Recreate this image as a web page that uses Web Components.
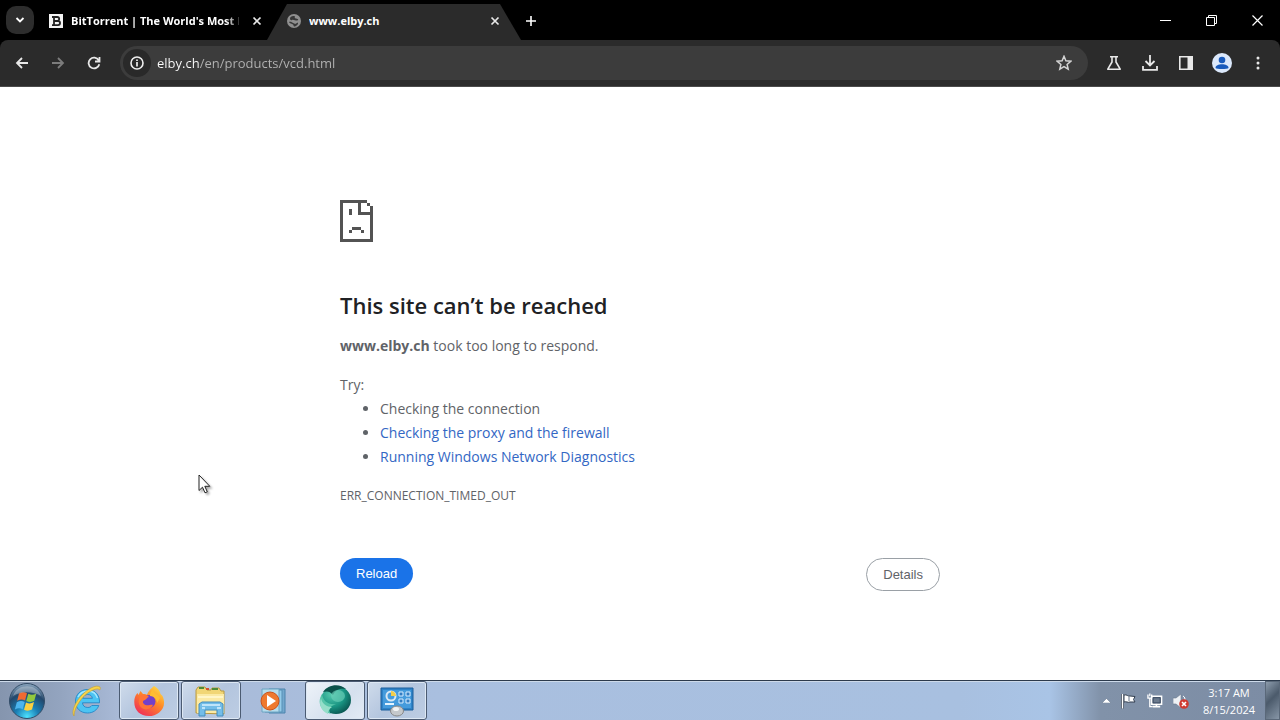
<!DOCTYPE html>
<html lang="en">
<head>
<meta charset="utf-8">
<meta name="viewport" content="width=device-width, initial-scale=1">
<title>www.elby.ch</title>
<style>
  body { margin: 0; background: #fff; font-family: "Open Sans", "Noto Sans", sans-serif; }
</style>
</head>
<body>
<desktop-screen></desktop-screen>
<script>
const define = (name, html) => {
  const template = document.createElement('template');
  template.innerHTML = html;
  customElements.define(name, class extends HTMLElement {
    constructor() {
      super();
      this.attachShadow({ mode: 'open' }).append(template.content.cloneNode(true));
    }
  });
};

define('icon-button', `
<style>
  :host { display: block; flex: none; width: 36px; height: 32px; color: #e8e8e8; }
  :host([wide]) { width: 46px; }
  :host([small]) { width: 20px; height: 20px; }
  :host([dim]) { color: #7c7c7c; }
  button { all: unset; width: 100%; height: 100%; display: flex; align-items: center; justify-content: center; }
</style>
<button type="button"><slot></slot></button>`);

define('browser-tab', `
<style>
  :host { display: flex; align-items: center; gap: 8px; height: 36px; box-sizing: border-box; padding-bottom: 2px; color: #fff; font: bold 11px/16px "Open Sans", sans-serif; }
  :host([active]) { background: #2b2b2b; clip-path: polygon(20px 0, 233px 0, 100% 100%, 0 100%); }
  .title { flex: 1; min-width: 0; overflow: hidden; white-space: nowrap; }
  :host(:not([active])) .title { -webkit-mask-image: linear-gradient(90deg, #000 155px, transparent 172px); mask-image: linear-gradient(90deg, #000 155px, transparent 172px); }
</style>
<slot name="icon"></slot>
<span class="title"><slot></slot></span>
<icon-button small><svg width="10" height="10" aria-label="Close tab"><path d="M1.500 1.500l7 7m0-7l-7 7" stroke="currentColor" stroke-width="1.700"/></svg></icon-button>`);

define('tab-strip', `
<style>
  :host { display: flex; align-items: end; height: 40px; background: #000; }
  .search { all: unset; margin: 0 15px 6px 6px; width: 28px; height: 28px; border-radius: 10px; background: #2d2d2d; display: grid; place-items: center; }
  .first { width: 218px; }
  .second { width: 254px; padding: 0 16px 2px 20px; }
  .add { height: 36px; padding-bottom: 2px; box-sizing: border-box; display: flex; align-items: center; }
  .window { margin-left: auto; height: 40px; display: flex; align-items: center; }
  svg { flex: none; display: block; }
</style>
<button class="search" aria-label="Search tabs"><svg width="10" height="8"><path d="M1.500 2L5 5.500 8.500 2" fill="none" stroke="#fff" stroke-width="1.800"/></svg></button>
<browser-tab class="first">
  <svg slot="icon" width="14" height="14" viewBox="0 0 14 14"><path fill="#f4f4f4" d="M0 0h14v14H0z"/><path fill="none" stroke="#222" stroke-width="1.800" d="M3 3h5.200a1.900 1.900 0 010 4H5h4a2 2 0 010 4.100H3M5 3v8"/></svg>BitTorrent | The World's Most Popular</browser-tab>
<browser-tab class="second" active>
  <svg slot="icon" width="14" height="14" viewBox="0 0 14 14"><circle cx="7" cy="7" r="7" fill="#8f8f8f"/><path d="M3 4.500c0-2 3-3 5-2-1 1.500.5 2 2.500 2.500 1 .3 1 1.500-.5 1.500C8 6.500 6 5 5 6 4 6.500 3 6 3 4.500zM2 8c2-.5 3 .5 4 1 1.500.5 2 1.500 3 .5l2-1c.5 2-2 4-4 4-1-1 0-2-2-2.500C3.500 9.500 2.500 9 2 8z" fill="#383838"/></svg>www.elby.ch</browser-tab>
<div class="add"><icon-button small><svg width="12" height="12" aria-label="New tab"><path d="M6 1v10M1 6h10" stroke="#fff" stroke-width="1.600"/></svg></icon-button></div>
<div class="window">
  <icon-button wide><svg width="11" height="11" aria-label="Minimize"><path d="M0 5.500h11" stroke="#fff"/></svg></icon-button>
  <icon-button wide><svg width="11" height="11" aria-label="Restore"><path d="M.5 2.500h8v8h-8zM2.500 2.500v-2h8v8h-2" fill="none" stroke="#fff"/></svg></icon-button>
  <icon-button wide><svg width="11" height="11" aria-label="Close"><path d="M.5 .5l10 10m0-10l-10 10" stroke="#fff" stroke-width="1.200"/></svg></icon-button>
</div>`);

define('address-bar', `
<style>
  :host { flex: 1; display: flex; align-items: center; height: 34px; border-radius: 17px; background: #3c3c3c; padding: 0 6px 0 3px; box-sizing: border-box; }
  .info { display: grid; place-items: center; width: 28px; height: 28px; border-radius: 50%; background: #292929; }
  input { flex: 1; min-width: 0; height: 24px; border: 0; padding: 0; margin: 0 6px; outline: 0; font: 13px/24px "Open Sans", sans-serif; color: transparent; background: linear-gradient(90deg, #fff 42px, #b4b4b4 42px); -webkit-background-clip: text; background-clip: text; }
</style>
<span class="info"><svg width="14" height="14" viewBox="0 0 14 14"><circle cx="7" cy="7" r="6" fill="none" stroke="#eee" stroke-width="1.600"/><path d="M7 6v4.500M7 3.500v1.600" stroke="#eee" stroke-width="1.700"/></svg></span>
<input type="text" aria-label="Address" value="elby.ch/en/products/vcd.html" spellcheck="false">
<icon-button><svg width="16" height="16" viewBox="0 0 16 16"><path d="M8 1.300l1.900 4.500 4.900.4-3.700 3.200 1.100 4.800L8 11.700l-4.200 2.500 1.100-4.800L1.200 6.200l4.900-.4z" fill="none" stroke="#d4d4d4" stroke-width="1.500"/></svg></icon-button>`);

define('nav-toolbar', `
<style>
  :host { display: block; background: #000; }
  nav { display: flex; align-items: center; height: 47px; box-sizing: border-box; padding: 0 4px; background: #2b2b2b; border-radius: 8px 8px 0 0; border-bottom: 1px solid #4a4a4a; }
  address-bar { margin: 0 8px; }
</style>
<nav>
  <icon-button><svg width="14" height="12" viewBox="0 0 14 12" fill="none" aria-label="Back"><path d="M13 6H2M7 1L2 6l5 5" stroke="currentColor" stroke-width="1.800"/></svg></icon-button>
  <icon-button dim><svg width="14" height="12" viewBox="0 0 14 12" fill="none" aria-label="Forward"><path d="M1 6h11M7 1l5 5-5 5" stroke="currentColor" stroke-width="1.800"/></svg></icon-button>
  <icon-button><svg width="14" height="14" viewBox="0 0 14 14" fill="none" aria-label="Reload page"><path d="M11.700 4.300A5.400 5.400 0 1012.300 8.200M12.500 1v4.500H8" stroke="currentColor" stroke-width="1.800"/></svg></icon-button>
  <address-bar></address-bar>
  <icon-button><svg width="16" height="16" viewBox="0 0 16 16" fill="none" aria-label="Labs"><path d="M4 1.800h8M6 2v5L1.800 14.200h12.400L10 7V2" stroke="currentColor" stroke-width="1.600" stroke-linejoin="round"/></svg></icon-button>
  <icon-button><svg width="16" height="16" viewBox="0 0 16 16" fill="none" aria-label="Downloads"><path d="M8 0v10M3.500 6L8 10.500 12.500 6M1 11v3.800h14V11" stroke="currentColor" stroke-width="1.800"/></svg></icon-button>
  <icon-button><svg width="14" height="14" viewBox="0 0 14 14" fill="none" aria-label="Side panel"><path d="M.8 .8h12.400v12.400H.8z" stroke="currentColor" stroke-width="1.600"/><path d="M8.500 0H14v14H8.500z" fill="currentColor"/></svg></icon-button>
  <icon-button><svg width="20" height="20" viewBox="0 0 20 20" aria-label="Profile"><circle cx="10" cy="10" r="10" fill="#dbe8fb"/><circle cx="10" cy="7" r="3.300" fill="#185abc"/><path d="M3.500 15c0-2.500 3-3.700 6.500-3.700s6.500 1.200 6.500 3.700c-1 1.300-12 1.300-13 0z" fill="#185abc"/></svg></icon-button>
  <icon-button><svg width="4" height="14" viewBox="0 0 4 14" fill="currentColor" aria-label="Menu"><circle cx="2" cy="2" r="1.500"/><circle cx="2" cy="7" r="1.500"/><circle cx="2" cy="12" r="1.500"/></svg></icon-button>
</nav>`);

define('error-page', `
<style>
  :host { display: block; width: 100%; max-width: 600px; margin: 0 auto; padding-top: 113px; box-sizing: border-box; color: #5f6368; font-size: 14px; line-height: 24px; }
  svg { display: block; }
  h1 { margin: 46px 0 12px; font-size: 22px; line-height: 34px; font-weight: 600; color: #202124; }
  p { margin: 0; }
  .try { margin-top: 15px; }
  ul { margin: 0; padding-left: 40px; }
  a { color: #3367c4; text-decoration: none; }
  .code { margin: 15px 0 50px; font-size: 12px; }
  .actions { display: flex; justify-content: space-between; align-items: start; }
  button { box-sizing: border-box; height: 31px; padding: 0 16px; border: 0; border-radius: 17px; font: 13px/16px "Liberation Sans", sans-serif; background: #1a73e8; color: #fff; }
  .details { height: 33px; border: 1px solid #9aa0a6; background: #fff; color: #5f6368; }
</style>
<svg width="33" height="42" viewBox="0 0 11 14" fill="#535353" shape-rendering="crispEdges" aria-hidden="true"><path d="M0 0h9v1h1v1h1v12H0zM1 1v12h9V5H6V1zM7 1v3h3V2H9V1zM3 3h1v2H3zM4 9h3v1H4zM3 10h1v1H3zM7 10h1v1H7z" fill-rule="evenodd"/></svg>
<h1>This site can’t be reached</h1>
<p><strong>www.elby.ch</strong> took too long to respond.</p>
<p class="try">Try:</p>
<ul>
  <li>Checking the connection</li>
  <li><a href="#proxy">Checking the proxy and the firewall</a></li>
  <li><a href="#diagnostics">Running Windows Network Diagnostics</a></li>
</ul>
<p class="code">ERR_CONNECTION_TIMED_OUT</p>
<div class="actions"><button type="button">Reload</button><button type="button" class="details">Details</button></div>`);

define('task-button', `
<style>
  :host { display: block; width: 60px; height: 39px; }
  button { all: unset; box-sizing: border-box; width: 100%; height: 100%; display: grid; place-items: center; border: 1px solid transparent; border-radius: 3px; }
  :host([open]) button { border-color: #4b5b72; background: linear-gradient(135deg, #cfdbeb, #b3c5de 50%, #bdcde3); box-shadow: inset 0 0 0 1px #dde8f4; }
  :host([front]) button { background: linear-gradient(135deg, #eef3f9, #d5e0ee 60%, #e3ebf5); }
</style>
<button type="button"><slot></slot></button>`);

define('system-tray', `
<style>
  :host { display: flex; align-items: center; height: 39px; margin-left: auto; color: #fff; }
  .icons { display: flex; align-items: center; gap: 10px; margin-right: 9px; }
  time { width: 62px; text-align: center; font: 11px/17px "Open Sans", sans-serif; }
  .peek { all: unset; box-sizing: border-box; width: 15px; height: 39px; margin-left: 5px; border: 1px solid #5a6879; background: linear-gradient(135deg, #8c9bac, #4b5a6b 45%, #8796a7); }
  svg { display: block; }
</style>
<div class="icons">
  <svg width="9" height="5"><path d="M0 5l4.500-4.500L9 5z" fill="#fff" stroke="#465b77" stroke-width=".4"/></svg>
  <svg width="16" height="16" viewBox="0 0 16 16"><path d="M1.500 1v14.500" stroke="#333f50" stroke-width="3"/><path d="M3 2c3-1 4 2 6 1l5 .5-1.500 3L14 9H9C7 10 5 8 3 9z" fill="#fff" stroke="#333f50"/><path d="M1.500 1v14.500" stroke="#fff" stroke-width="1.500"/><path d="M8 4v4" stroke="#68778b"/></svg>
  <svg width="16" height="16" viewBox="0 0 17 16"><path d="M5 3h10.500v8.500H5z" fill="#6b7a8e" stroke="#fff" stroke-width="1.600"/><path d="M6 14h8M10 11v3" stroke="#fff" stroke-width="1.700"/><path d="M1 1v4h4V1M3 0v3M3 5v9h3" fill="none" stroke="#fff" stroke-width="1.400"/><path d="M6.500 4.500h7.500v5.500H6.500z" fill="none" stroke="#394960"/></svg>
  <svg width="16" height="16" viewBox="0 0 16 16"><path d="M0 5h3l5-4v14l-5-4H0z" fill="#eef1f5" stroke="#69788d" stroke-width=".6"/><path d="M10 3c2 1 2 3 2 4" fill="none" stroke="#fff"/><circle cx="11" cy="11" r="4.800" fill="#cf3b31"/><path d="M9 9l4 4m0-4l-4 4" stroke="#fff" stroke-width="1.600"/></svg>
</div>
<time datetime="2024-08-15T03:17">3:17 AM<br>8/15/2024</time>
<button class="peek" aria-label="Show desktop"></button>`);

define('task-bar', `
<style>
  :host { display: flex; height: 40px; box-sizing: border-box; border-top: 1px solid #2c3a4c; box-shadow: inset 0 1px #cddaea; background: linear-gradient(90deg, #8595ae 0, #93a4bf 60px, #a9bad7 120px, #a9bfdf 440px, #a8c0e0 75%, #a9c4e6 82%, #8192a9 86%, #7c8ca4 100%); }
  .start { all: unset; width: 54px; height: 39px; display: grid; place-items: center; margin-right: 3px; }
  .apps { display: flex; gap: 2px; }
  svg { display: block; }
</style>
<button class="start" aria-label="Start"><svg width="38" height="38" viewBox="0 0 38 38">
  <defs><radialGradient id="orb" cx=".5" cy=".95" r=".95"><stop offset="0" stop-color="#4de3ff"/><stop offset=".35" stop-color="#1a7fb5"/><stop offset=".7" stop-color="#23476b"/><stop offset="1" stop-color="#8fa9c2"/></radialGradient></defs>
  <circle cx="19" cy="19" r="17.500" fill="url(#orb)" stroke="#334d68"/>
  <path d="M11 11.500c3-1.700 5.500-1.600 8-.3l-2 7.300c-2.500-1.300-5-1.200-7.800.3z" fill="#ef6a31"/><path d="M20.300 11.800c2.700 1.400 5.200 1.200 8-.4l-2 7.400c-2.700 1.500-5.300 1.500-8 .2z" fill="#92c83e"/>
  <path d="M8.800 20.200c3-1.500 5.300-1.500 7.900-.2l-2 7.300c-2.600-1.300-5-1.300-7.800.3z" fill="#4cb4ee"/><path d="M18 20.500c2.700 1.300 5.200 1.200 8-.4l-2 7.400c-2.800 1.500-5.300 1.500-8 .2z" fill="#fcd040"/>
  <path d="M5 14C9 1 29 1 33 14 25 9 13 9 5 14z" fill="#fff" opacity=".3"/></svg></button>
<div class="apps">
  <task-button><svg width="32" height="34" viewBox="0 0 32 34" aria-label="Internet Explorer"><path d="M16.500 5.500c-7 0-12 5-12 11.800 0 7 5 11.700 12 11.700 5.500 0 9.500-2.800 11.300-7.500h-7c-1 1.400-2.300 2-4 2-3.200 0-5.100-1.800-5.300-4.700H28.500C29 11 24 5.500 16.500 5.500zM11.700 14.300c.6-2.500 2.300-3.800 4.900-3.800s4.300 1.300 4.800 3.800z" fill="#4cc4f3" stroke="#1b80c4" stroke-width=".8"/><path d="M7 13c2-4 6-6 10-6s8 2 9.500 7" fill="none" stroke="#a6e7ff" stroke-width="1.300"/><path d="M3 32C-1 27 7 11 20 4c4-2 7-2.500 9-1 .5 1 .3 2-.3 3C27 4 24 5 20 7 12 11 3 23 3 32z" fill="#f6d34b" stroke="#c89d27" stroke-width=".6"/></svg></task-button>
  <task-button open><svg width="32" height="32" viewBox="0 0 32 32" aria-label="Firefox"><defs><linearGradient id="fx" x1=".9" y1="0" x2=".2" y2="1"><stop stop-color="#ffe64a"/><stop offset=".45" stop-color="#ff8a25"/><stop offset="1" stop-color="#ef2a5b"/></linearGradient></defs><path d="M21 1c4 2 6 5 6.500 8l2 2C35 23 25 31 16 31 6 31 0 24 1.500 14c.5-3 2-5 3-6l1 2 2-4 2.500 3c2 0 3 .3 4 .8 1-4 4-6 7-8.800z" fill="url(#fx)"/><circle cx="16" cy="16.500" r="6.500" fill="#7340c8"/><path d="M8 10c4-1 6 0 8 2-2 0-2 2-4 3-2 .5-3 2-1 4 3 3 7 0 9 1-3 6-12 6-14-1-.8-3 0-7 2-9z" fill="#ff7434"/><path d="M17 11c4 0 7 3 7 7l3-5c-2-4-6-4-7-8-2 1-3 3-3 6z" fill="#ffbd32"/></svg></task-button>
  <task-button open><svg width="34" height="32" viewBox="0 0 34 32" aria-label="Windows Explorer"><path d="M2 28V5l2-3h7l2 3h4l1-2h7l2 3h3v23z" fill="#f1d676" stroke="#b99a43"/><path d="M5 3h5M18 4h6" stroke="#4e8b38" stroke-width="2"/><path d="M12 4h3" stroke="#d4502f" stroke-width="2"/><path d="M3 9h27v19H3z" fill="#fbeaa5"/><path d="M4 12h25" stroke="#fff6c9" stroke-width="2"/><path d="M5 31V19l3-2h18l3 2v12h-6v-6H11v6z" fill="#73bde8" stroke="#438cbd"/><path d="M8 20h18M8 23h3m12 0h4" stroke="#d7f1ff" stroke-width="1.500"/></svg></task-button>
  <task-button><svg width="30" height="30" viewBox="0 0 30 30" aria-label="Media Player"><path d="M11 3h16v24H11z" fill="#73a8ce" stroke="#4c84ad"/><path d="M7 4h17v22H7z" fill="#94cbe9" stroke="#578fb5"/><path d="M4 3h17v23H4z" fill="#b5dded" stroke="#6da4c2"/><circle cx="12" cy="15" r="9" fill="#ee792f" stroke="#cc521a"/><path d="M9 9l9 6-9 6z" fill="#fff"/></svg></task-button>
  <task-button open front><svg width="34" height="34" viewBox="0 0 34 34" aria-label="Browser"><defs><radialGradient id="sea" cx=".35" cy=".3" r=".8"><stop stop-color="#55c9ae"/><stop offset=".55" stop-color="#199482"/><stop offset="1" stop-color="#084c49"/></radialGradient></defs><ellipse cx="18" cy="16" rx="15" ry="14" fill="url(#sea)"/><path d="M4 10c-5 8-2 17 9 20-4-5 0-8 5-10C10 21 5 17 4 10z" fill="#55c4a9"/><path d="M10 30C2 26 1 20 3 14c1 6 6 9 11 9-3 2-4 4-4 7z" fill="#95dec9"/><path d="M5 8C10 0 22-1 28 5c-8-1-11 2-13 6-3-4-6-4-10-3z" fill="#0b514b"/><ellipse cx="20" cy="12" rx="7" ry="6" fill="#6cd0b8" opacity=".65"/></svg></task-button>
  <task-button open><svg width="34" height="32" viewBox="0 0 34 32" aria-label="Control Panel"><path d="M1 3h32v22H1z" fill="#2e83c8" stroke="#1d5e9b"/><path d="M3 5h28v18H3z" fill="#459bdc"/><circle cx="11" cy="11" r="4.500" fill="none" stroke="#d8e8f4" stroke-width="2"/><path d="M11 6v5h5a5 5 0 00-5-5z" fill="#f3ce4b"/><path d="M19 7h4v4h-4zm7 0h4v4h-4zm-7 7h4v4h-4zm7 0h4v4h-4z" fill="#327cc2" stroke="#d4ecff"/><path d="M5 19h9" stroke="#e4f4ff" stroke-width="2"/><ellipse cx="17" cy="26" rx="6.500" ry="5" fill="#c5c8cb" stroke="#888"/><ellipse cx="16" cy="24" rx="3" ry="2" fill="#f3f4f4"/></svg></task-button>
</div>
<system-tray></system-tray>`);

define('mouse-pointer', `
<style>
  :host { position: absolute; left: 198px; top: 474px; pointer-events: none; }
  svg { display: block; filter: drop-shadow(2px 2px 1px #0005); }
</style>
<svg width="13" height="20" viewBox="0 0 13 20"><path d="M1 1v15.500l3.500-3.300 2.500 5.600 2.300-1-2.500-5.500h5z" fill="#fff" stroke="#222"/></svg>`);

define('desktop-screen', `
<style>
  :host { display: flex; flex-direction: column; min-height: 100vh; position: relative; overflow: hidden; }
  main { flex: 1; }
</style>
<tab-strip></tab-strip>
<nav-toolbar></nav-toolbar>
<main><error-page></error-page></main>
<task-bar></task-bar>
<mouse-pointer></mouse-pointer>`);
</script>
</body>
</html>
